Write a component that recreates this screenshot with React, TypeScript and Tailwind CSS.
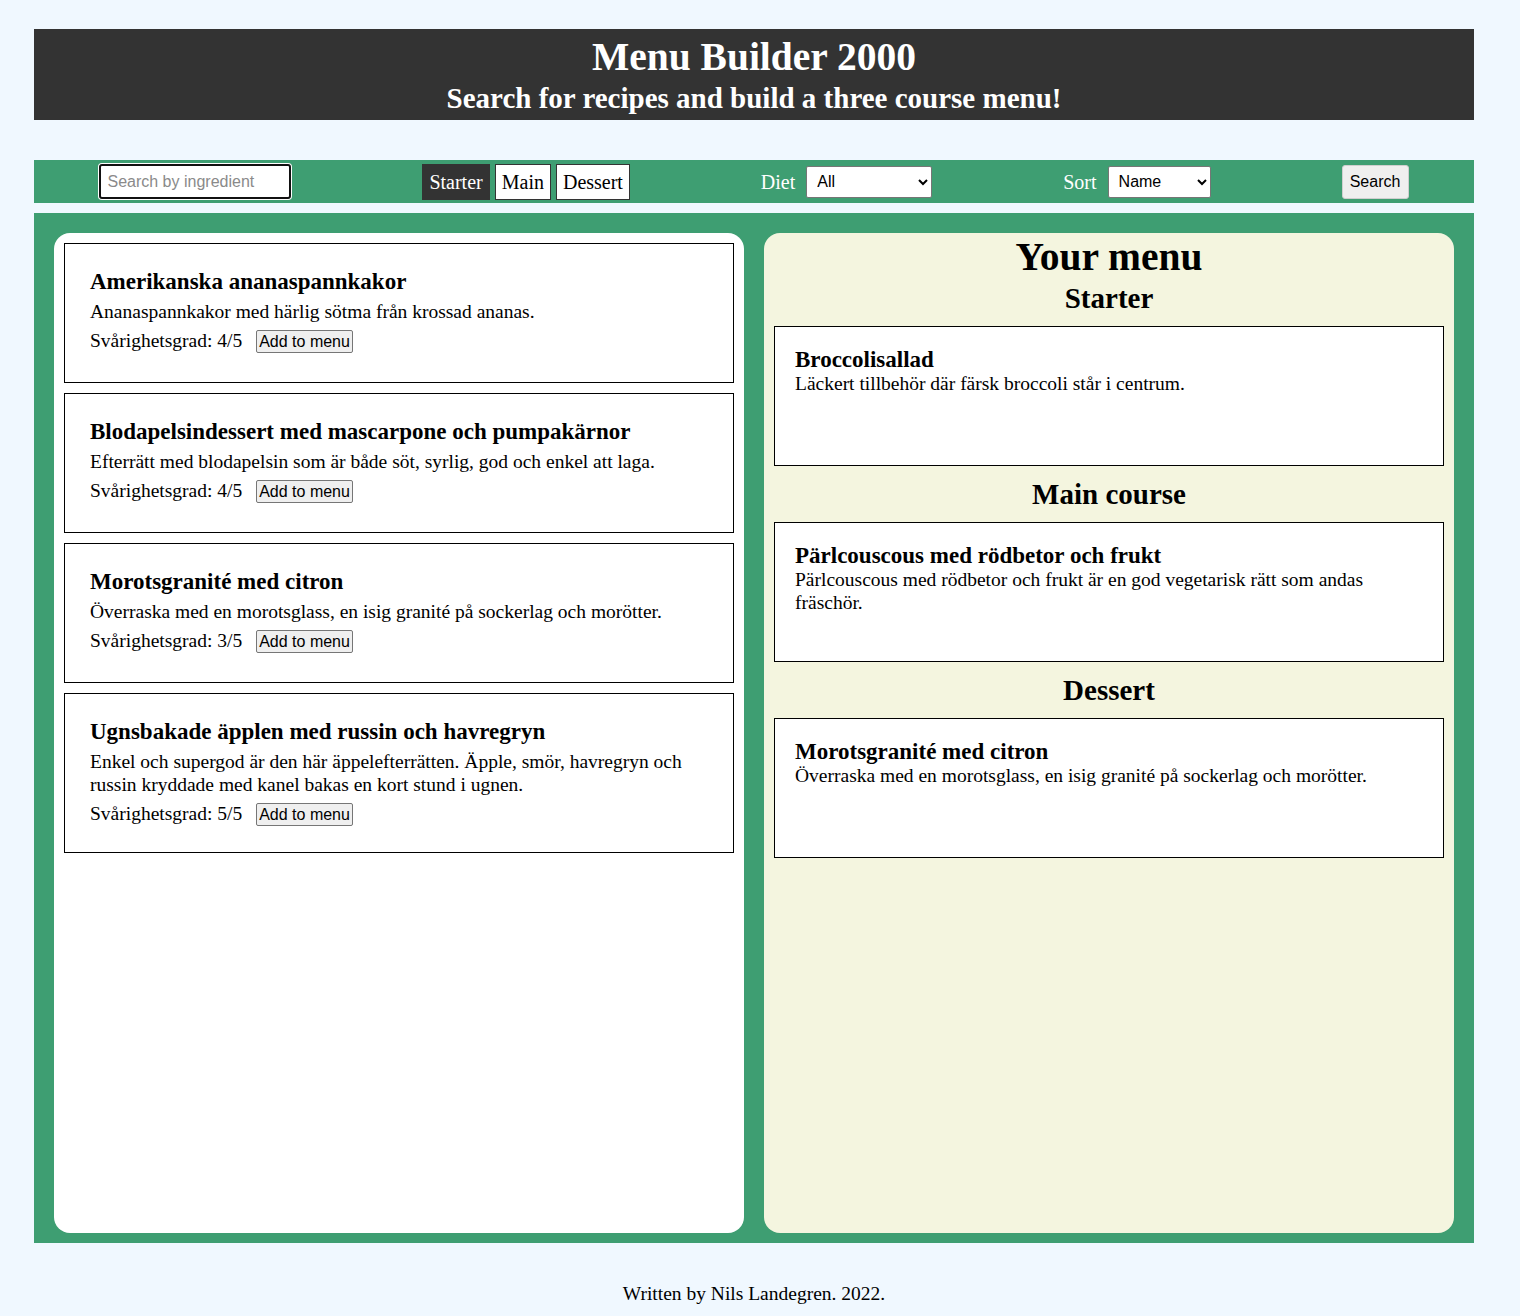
import React from "react"

const recipes = [
	{
		title: "Amerikanska ananaspannkakor",
		description: "Ananaspannkakor med härlig sötma från krossad ananas.",
		difficulty: 4,
	},
	{
		title: "Blodapelsindessert med mascarpone och pumpakärnor",
		description: "Efterrätt med blodapelsin som är både söt, syrlig, god och enkel att laga.",
		difficulty: 4,
	},
	{
		title: "Morotsgranité med citron",
		description: "Överraska med en morotsglass, en isig granité på sockerlag och morötter.",
		difficulty: 3,
	},
	{
		title: "Ugnsbakade äpplen med russin och havregryn",
		description:
			"Enkel och supergod är den här äppelefterrätten. Äpple, smör, havregryn och russin kryddade med kanel bakas en kort stund i ugnen.",
		difficulty: 5,
	},
]

const menu = [
	{
		course: "Starter",
		title: "Broccolisallad",
		description: "Läckert tillbehör där färsk broccoli står i centrum.",
	},
	{
		course: "Main course",
		title: "Pärlcouscous med rödbetor och frukt",
		description: "Pärlcouscous med rödbetor och frukt är en god vegetarisk rätt som andas fräschör.",
	},
	{
		course: "Dessert",
		title: "Morotsgranité med citron",
		description: "Överraska med en morotsglass, en isig granité på sockerlag och morötter.",
	},
]

const serif = "font-['Liberation_Serif',_'Times_New_Roman',_serif]"
const sans = "font-['Liberation_Sans',_Arial,_sans-serif]"

export default function App() {
	const [course, setCourse] = React.useState("Starter")

	return (
		<div className={`min-h-screen bg-[#f0f8ff] pl-[34px] pt-[29px] pb-[12px] text-black ${serif}`}>
			<div className="w-[1440px]">
				{/* Header */}
				<header className="bg-[#333333] pt-[5px] pb-[6px] text-center text-white">
					<h1 className="text-[39.5px] font-bold leading-[46px]">Menu Builder 2000</h1>
					<h2 className="mt-[2px] text-[29px] font-bold leading-[32px]">
						Search for recipes and build a three course menu!
					</h2>
				</header>

				{/* Search bar */}
				<nav className="mt-[40px] flex h-[43px] items-center justify-around bg-[#3e9e72]">
					<input
						type="text"
						placeholder="Search by ingredient"
						className={`h-[35px] w-[192px] rounded-[3px] border-2 border-[#111111] bg-white px-[6px] text-[16px] outline-none ring-1 ring-white placeholder:text-[#8a8a8a] ${sans}`}
					/>
					<div className="flex items-center gap-[5px]">
						{["Starter", "Main", "Dessert"].map((c) => (
							<button
								key={c}
								onClick={() => setCourse(c)}
								className={`h-[36px] border border-[#333333] px-[6px] text-[20px] ${
									course === c ? "bg-[#333333] text-white" : "bg-white text-black"
								}`}>
								{c}
							</button>
						))}
					</div>
					<label className="flex items-center gap-[11px] text-[20px] text-white">
						Diet
						<select
							className={`h-[32px] w-[126px] rounded-[2px] border border-[#767676] bg-white px-[6px] text-[16px] text-black ${sans}`}>
							<option>All</option>
							<option>Vegetarian</option>
							<option>Vegan</option>
						</select>
					</label>
					<label className="flex items-center gap-[11px] text-[20px] text-white">
						Sort
						<select
							className={`h-[32px] w-[103px] rounded-[2px] border border-[#767676] bg-white px-[6px] text-[16px] text-black ${sans}`}>
							<option>Name</option>
							<option>Difficulty</option>
						</select>
					</label>
					<button
						className={`h-[34px] w-[67px] rounded-[3px] border border-[#cfcfcf] bg-[#efefef] text-[16px] ${sans}`}>
						Search
					</button>
				</nav>

				{/* Main */}
				<main className="mt-[10px] flex gap-[20px] bg-[#3e9e72] px-[20px] pt-[20px] pb-[10px]">
					<section className="flex h-[1000px] flex-1 flex-col gap-[10px] rounded-[16px] bg-white p-[10px]">
						{recipes.map((r) => (
							<div key={r.title} className="min-h-[140px] border border-black bg-white px-[25px] pt-[25px] pb-[26px]">
								<h3 className="mb-[6px] text-[23px] font-bold leading-[25px]">{r.title}</h3>
								<p className="text-[19.5px] leading-[23px]">{r.description}</p>
								<div className="mt-[6px] flex h-[24px] items-center text-[19.5px]">
									<span>Svårighetsgrad: {r.difficulty}/5</span>
									<button
										className={`ml-[14px] h-[23px] rounded-[2px] border border-[#767676] bg-[#efefef] px-[2px] text-[16px] leading-[19px] ${sans}`}>
										Add to menu
									</button>
								</div>
							</div>
						))}
					</section>

					<section className="h-[1000px] flex-1 rounded-[16px] bg-[#f4f5df] px-[10px] pt-[2px]">
						<h2 className="text-center text-[39.5px] font-bold leading-[44px]">Your menu</h2>
						{menu.map((m, i) => (
							<div key={m.course}>
								<h3 className={`text-center text-[29px] font-bold leading-[32px] ${i === 0 ? "mt-[3px]" : "mt-[12px]"}`}>
									{m.course}
								</h3>
								<div className="mt-[12px] h-[140px] border border-black bg-white px-[20px] pt-[21px]">
									<h4 className="text-[23px] font-bold leading-[24px]">{m.title}</h4>
									<p className="text-[19.5px] leading-[23px]">{m.description}</p>
								</div>
							</div>
						))}
					</section>
				</main>

				<footer className="mt-[40px] text-center text-[19.5px] leading-[21px]">Written by Nils Landegren. 2022.</footer>
			</div>
		</div>
	)
}
